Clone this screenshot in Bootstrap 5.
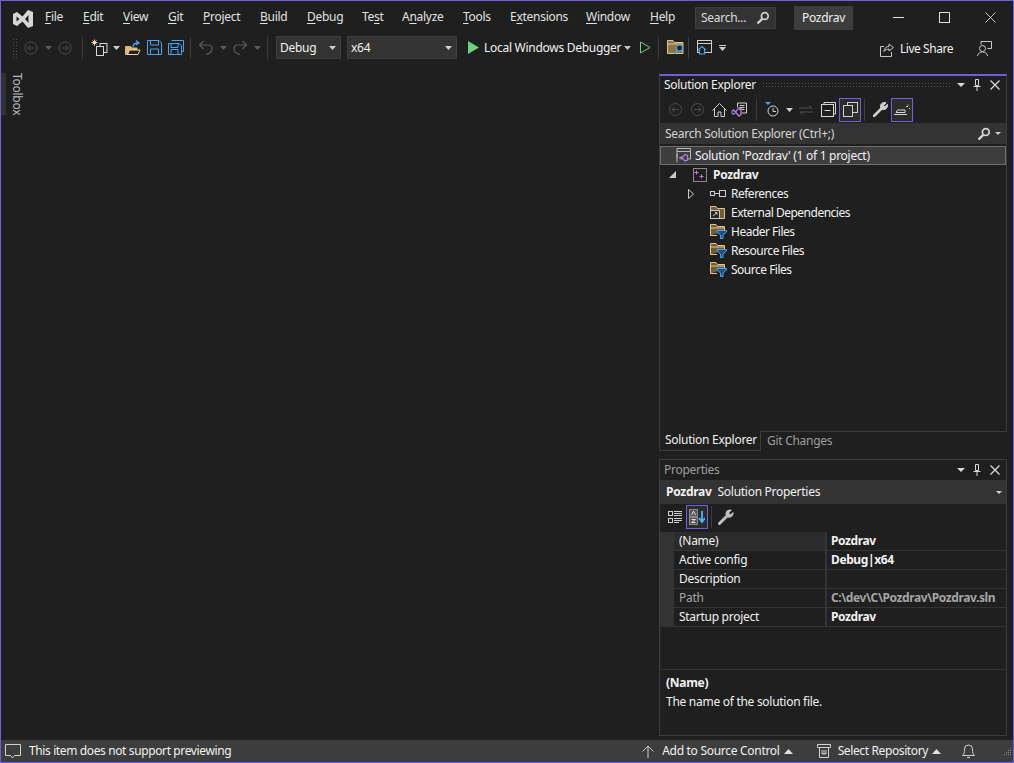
<!DOCTYPE html>
<html lang="en">
<head>
<meta charset="utf-8">
<title>Pozdrav - Visual Studio</title>
<link href="https://cdn.jsdelivr.net/npm/bootstrap@5.3.0/dist/css/bootstrap.min.css" rel="stylesheet">
<style>
html,body{height:100%;margin:0;overflow:hidden}
body{background:#1f1f1f;color:#f1f1f1;font-family:"Noto Sans","Liberation Sans",sans-serif;font-size:12px;line-height:16px;letter-spacing:-.28px}
svg{display:block;flex:none}
u{text-underline-offset:2px;text-decoration-thickness:1px}
.vs-frame{width:1014px;height:763px;border:1px solid #6f5fdc}
.vs-title{height:33px;flex:none}
.vs-logo{width:44px;padding-left:12px;padding-top:2px;flex:none}
.vs-menu{display:grid;grid-template-columns:38px 40px 45px 35px 57px 47px 55px 40px 61px 47px 76px 64px 45px;width:650px;color:#e2e2e2;padding-bottom:2px;flex:none}
.vs-search{width:81px;height:22px;background:#333;border:1px solid #3d3d3d;padding:0 5px;color:#dcdcdc;flex:none}
.vs-sol{width:59px;height:24px;background:#3d3d3d;margin-left:18px;color:#f1f1f1;justify-content:center;flex:none}
.vs-wins{margin-left:auto}
.vs-wbtn{width:46px;justify-content:center}
.vs-tool{height:28px;flex:none;padding-left:11px;padding-bottom:1px}
.tw{display:flex;align-items:center;justify-content:center;height:22px;flex:none}
.w3{width:3px;flex:none}.w4{width:4px;flex:none}.w5{width:5px;flex:none}.w6{width:6px;flex:none}.w7{width:7px;flex:none}.w8{width:8px;flex:none}.w10{width:10px}.w12{width:12px}.w14{width:14px}.w16{width:16px}.w17{width:17px;flex:none}.w18{width:18px}.w20{width:20px}.w22{width:22px}
.vs-sep{width:1px;height:22px;background:#3d3d3d;flex:none}
.vs-grip{width:6px;height:20px;flex:none;background-image:radial-gradient(#555 .6px,transparent .7px);background-size:3px 3px}
.vs-combo{height:23px;background:#333;border:1px solid #3d3d3d;padding:0 4px 0 3px;justify-content:space-between;color:#f1f1f1;flex:none}
.c-debug{width:65px}.c-x64{width:110px}
.vs-playgap{margin-left:10px}
.vs-lsh{margin-top:2px}
.vs-lstext{margin-left:6px;letter-spacing:-.45px}
.vs-fb{margin-left:24px;margin-right:21px}
.vs-main{flex:1 1 0;min-height:0}
.vs-left{flex:1 1 0}
.vs-toolbox{margin-top:11px;height:42px;width:22px}
.vs-strip{width:6px;background:#333;height:42px}
.vs-vtext{writing-mode:vertical-rl;margin-left:5px;color:#b9b9b9;line-height:12px}
.vs-right{width:348px;margin:12px 6px 4px 0;flex:none}
.vs-se{height:357px;border:1px solid #3d3d3d;border-width:2px 1px 0;border-top-color:#6f5fdc;flex:none}
.vs-phead{height:20px;padding:0 4px;flex:none}
.vs-phead-se{padding-bottom:2px}
.vs-dots{flex:1 1 0;height:7px;margin:0 6px;background-image:radial-gradient(#555 .6px,transparent .7px);background-size:3px 3px}
.vs-ptool{height:27px;padding-left:4px;flex:none}
.vs-on{width:22px;height:24px;border:1px solid #6f5fdc;background:#2c2c2c;display:flex;align-items:center;justify-content:center;flex:none}
.vs-find{height:21px;background:#333;padding:0 5px;color:#d5d5d5;flex:none;justify-content:space-between}
.vs-selrow{height:19px;margin:2px 0 0;background:#3d3d3d;border:1px solid #707070;padding-left:15px;flex:none}
.vs-row{height:19px;flex:none;letter-spacing:-.5px}
.r-proj{padding-left:9px}.r-ref{padding-left:28px}.r-item{padding-left:50px}
.vs-ptxt{margin-left:5px;letter-spacing:-.3px}
.vs-t4{margin-left:4px}.vs-t5{margin-left:5px}.vs-t6{margin-left:6px}
.vs-tabs{height:20px;flex:none;padding-bottom:0}
.vs-tab1{width:102px;border:1px solid #3d3d3d;border-top:0;padding:0 0 2px 5px;display:flex;align-items:center}
.vs-tabrest{flex:1 1 0;border-top:1px solid #3d3d3d;padding:0 0 2px 6px;color:#9d9d9d;display:flex;align-items:center}
.vs-props{height:277px;margin-top:8px;border:1px solid #3d3d3d;flex:none}
.vs-ptitle{color:#9d9d9d}
.vs-pcombo{height:24px;background:#333;padding:0 4px 0 6px;flex:none}
.vs-ptb{height:28px;padding:0 0 2px 4px;flex:none}
.vs-gridbox{background:#333;padding-left:14px;flex:none}
.vs-gr{height:19px;border-bottom:1px solid #333;background:#1f1f1f;display:flex;align-items:center}
.vs-gn{width:153px;padding-left:5px;border-right:2px solid #333;height:18px;flex:none;display:flex;align-items:center}
.vs-gv{padding-left:4px;font-weight:700;white-space:nowrap;letter-spacing:-.4px}
.vs-hd{background:#2b2b2b}
.vs-dim{color:#a5a5a5}
.vs-gap{height:43px;border-bottom:1px solid #333;flex:none;border-left:1px solid #2a2a2a}
.vs-desc{padding:5px 5px 0 6px}
.vs-desc2{margin-top:3px}
.vs-status{height:22px;background:#3d3d3d;flex:none;color:#f1f1f1;letter-spacing:-.38px}
.vs-addtxt{letter-spacing:-.29px}
.vs-sa1{margin-right:24px}
.vs-seltxt{margin-left:7px}
.vs-sa2{margin-right:21px}
.vs-bell{margin-right:28px}
.vs-gripbr{margin-right:1px}
</style>
</head>
<body>
<div class="vs-frame d-flex flex-column">
  <!-- title bar -->
  <div class="vs-title d-flex align-items-center">
    <div class="vs-logo">
      <svg width="20" height="18" viewBox="0 0 20 18"><path fill="#d6d6d6" fill-rule="evenodd" d="M0 4 L4 2 L9.500 6.500 L15 0 L20 2 V16 L15 18 L9.500 11.500 L4 16 L0 14Z M3.500 6.500 V11.500 L6.500 9Z M15.500 5 L12 9 L15.500 13Z"/></svg>
    </div>
    <div class="vs-menu">
      <span><u>F</u>ile</span><span><u>E</u>dit</span><span><u>V</u>iew</span><span><u>G</u>it</span><span><u>P</u>roject</span><span><u>B</u>uild</span><span><u>D</u>ebug</span><span>Te<u>s</u>t</span><span>A<u>n</u>alyze</span><span><u>T</u>ools</span><span>E<u>x</u>tensions</span><span><u>W</u>indow</span><span><u>H</u>elp</span>
    </div>
    <div class="vs-search d-flex align-items-center justify-content-between">
      <span>Search...</span>
      <svg width="14" height="14" viewBox="0 0 14 14" fill="none" stroke="#d0d0d0"><circle cx="8.800" cy="5" r="3.400" stroke-width="1.700"/><path d="M6.200 7.800 L1.500 12.500" stroke-width="2.400"/></svg>
    </div>
    <div class="vs-sol d-flex align-items-center">Pozdrav</div>
    <div class="vs-wins d-flex align-items-center">
      <div class="vs-wbtn d-flex"><svg width="11" height="11" viewBox="0 0 11 11"><path d="M0 5.500H11" stroke="#e0e0e0"/></svg></div>
      <div class="vs-wbtn d-flex"><svg width="11" height="11" viewBox="0 0 11 11"><rect x=".5" y=".5" width="10" height="10" fill="none" stroke="#e0e0e0"/></svg></div>
      <div class="vs-wbtn d-flex"><svg width="11" height="11" viewBox="0 0 11 11"><path d="M.5 .5L10.500 10.500M10.500 .5L.5 10.500" stroke="#c8c8c8"/></svg></div>
    </div>
  </div>

  <!-- toolbar -->
  <div class="vs-tool d-flex align-items-center">
    <div class="vs-grip"></div>
    <div class="tw w18 ms-1"><svg width="14" height="14" viewBox="0 0 14 14" fill="none" stroke="#4d4d4d"><circle cx="7" cy="7" r="6"/><path d="M10.500 7H3.500M6.500 4L3.500 7L6.500 10"/></svg></div>
    <div class="tw w16"><svg width="7" height="4" viewBox="0 0 7 4"><path d="M0 0H7L3.500 4Z" fill="#5c5c5c"/></svg></div>
    <div class="tw w18"><svg width="14" height="14" viewBox="0 0 14 14" fill="none" stroke="#4d4d4d"><circle cx="7" cy="7" r="6"/><path d="M3.500 7H10.500M7.500 4L10.500 7L7.500 10"/></svg></div>
    <div class="w8"></div><div class="vs-sep"></div><div class="w8"></div>
    <div class="tw w18"><svg width="18" height="18" viewBox="0 0 18 18" fill="none"><rect x="9" y="4.500" width="7" height="9" stroke="#d8d8d8"/><rect x="5.500" y="7.500" width="7" height="9" fill="#1f1f1f" stroke="#d8d8d8"/><path d="M3.500 0.500V6.500M.5 3.500H6.500M1.500 1.500L5.500 5.500M5.500 1.500L1.500 5.500" stroke="#eed9a0"/></svg></div>
    <div class="tw w14"><svg width="7" height="4" viewBox="0 0 7 4"><path d="M0 0H7L3.500 4Z" fill="#d0d0d0"/></svg></div>
    <div class="tw w20"><svg width="16" height="16" viewBox="0 0 16 16" fill="none"><path d="M.5 14.500V6.500H5.500L7 8H12V14.500Z" fill="#dcb67a" stroke="#dcb67a"/><path d="M2.500 14.500L4.500 10H15L13 14.500Z" fill="#1f1f1f" stroke="#efd9a6"/><path d="M8 7C8 4 10 3 13 3M11 .5L14 3L11 5" stroke="#4da3f0" stroke-width="1.300"/></svg></div>
    <div class="tw w22"><svg width="15" height="15" viewBox="0 0 15 15" fill="none" stroke="#4da3f0"><path d="M.5 .5H12L14.500 3V14.500H.5Z"/><path d="M3.500 .5V5H11.500V.5M3.500 14.500V9H11.500V14.500"/></svg></div>
    <div class="tw w22"><svg width="16" height="15" viewBox="0 0 16 15" fill="none" stroke="#4da3f0"><path d="M3.500 .5H15.500V11.500H13.500"/><path d="M.5 3.500H11L13.500 5.500V14.500H.5Z"/><path d="M3 3.500V7.500H10V3.500M3 14.500V9.500H10V14.500"/></svg></div>
    <div class="w3"></div><div class="vs-sep"></div><div class="w8"></div>
    <div class="tw w14"><svg width="14" height="15" viewBox="0 0 14 15" fill="none" stroke="#5c5c5c" stroke-width="1.200"><path d="M.5 5H9C12 5 13 7 13 9S11 13.500 7 14.500M4.500 1L.5 5L4.500 9"/></svg></div>
    <div class="tw w20"><svg width="7" height="4" viewBox="0 0 7 4"><path d="M0 0H7L3.500 4Z" fill="#5c5c5c"/></svg></div>
    <div class="tw w14"><svg width="14" height="15" viewBox="0 0 14 15" fill="none" stroke="#5c5c5c" stroke-width="1.200"><path d="M13.500 5H5C2 5 1 7 1 9S3 13.500 7 14.500M9.500 1L13.500 5L9.500 9"/></svg></div>
    <div class="tw w20"><svg width="7" height="4" viewBox="0 0 7 4"><path d="M0 0H7L3.500 4Z" fill="#5c5c5c"/></svg></div>
    <div class="vs-sep"></div><div class="w8"></div>
    <div class="vs-combo c-debug d-flex align-items-center"><span>Debug</span><svg width="7" height="4" viewBox="0 0 7 4"><path d="M0 0H7L3.500 4Z" fill="#d0d0d0"/></svg></div>
    <div class="w6"></div>
    <div class="vs-combo c-x64 d-flex align-items-center"><span>x64</span><svg width="7" height="4" viewBox="0 0 7 4"><path d="M0 0H7L3.500 4Z" fill="#d0d0d0"/></svg></div>
    <div class="tw vs-playgap w12"><svg width="11" height="13" viewBox="0 0 11 13"><path d="M0 0L11 6.500L0 13Z" fill="#6fcf7c"/></svg></div>
    <div class="w5"></div>
    <span class="text-nowrap">Local Windows Debugger</span>
    <div class="tw w12"><svg width="7" height="4" viewBox="0 0 7 4"><path d="M0 0H7L3.500 4Z" fill="#c8c8c8"/></svg></div>
    <div class="w4"></div>
    <div class="tw w16"><svg width="11" height="13" viewBox="0 0 11 13" fill="none"><path d="M.5 1L10 6.500L.5 12Z" stroke="#6fcf7c"/></svg></div>
    <div class="w5"></div><div class="vs-sep"></div><div class="w8"></div>
    <div class="tw w18"><svg width="18" height="15" viewBox="0 0 18 15" fill="none"><path d="M.5 13.500V.5H6L7.500 2.500H16V13.500Z" fill="#8a7449" stroke="#e3c58c"/><path d="M1 4H15.500" stroke="#e3c58c"/><circle cx="12.500" cy="8" r="3" fill="#1f1f1f" stroke="#4da3f0" stroke-width="1.200"/><path d="M10.300 10.300L7.500 14" stroke="#4da3f0" stroke-width="1.700"/></svg></div>
    <div class="w3"></div><div class="vs-sep"></div><div class="w7"></div>
    <div class="tw w16"><svg width="15" height="15" viewBox="0 0 15 15" fill="none"><rect x=".5" y=".5" width="14" height="12" stroke="#cfcfcf"/><path d="M.5 3.500H14.500" stroke="#cfcfcf"/><path d="M1 10L5 6.500L9 10M2.500 9.500V14H7.500V9.500" fill="#1f1f1f" stroke="#4da3f0" stroke-width="1.100"/></svg></div>
    <div class="tw w12 ms-1"><svg width="7" height="7" viewBox="0 0 7 7"><path d="M0 1H7V2H0ZM0 3H7L3.500 7Z" fill="#d0d0d0"/></svg></div>
    <div class="ms-auto d-flex align-items-center vs-lsh">
      <svg width="14" height="16" viewBox="0 0 14 16" fill="none" stroke="#c8c8c8"><path d="M4 5.500H.5V15.500H11.500V11"/><path d="M4 10.500C4 7 6.500 5.500 9 5.500V3L13.500 6.500L9 10V8C7 8 5 9 4 10.500Z"/></svg>
      <span class="text-nowrap vs-lstext">Live Share</span>
      <div class="tw vs-fb"><svg width="15" height="16" viewBox="0 0 15 16" fill="none" stroke="#c8c8c8"><circle cx="5.500" cy="7.500" r="3"/><path d="M.5 15C1 12 3 11 5.500 11S10 12 10.500 15M4 3.500V.5H14.500V7.500H10.500"/></svg></div>
    </div>
  </div>

  <!-- main -->
  <div class="vs-main d-flex">
    <div class="vs-left">
      <div class="vs-toolbox d-flex">
        <div class="vs-strip"></div>
        <div class="vs-vtext">Toolbox</div>
      </div>
    </div>
    <div class="vs-right d-flex flex-column">
      <div class="vs-se d-flex flex-column">
        <div class="vs-phead vs-phead-se d-flex align-items-center">
          <span class="text-nowrap">Solution Explorer</span>
          <div class="vs-dots"></div>
          <div class="d-flex align-items-center gap-1">
            <div class="tw w10"><svg width="8" height="4" viewBox="0 0 8 4"><path d="M0 0H8L4 4Z" fill="#d8d8d8"/></svg></div>
            <div class="tw w14"><svg width="8" height="12" viewBox="0 0 8 12" fill="none" stroke="#d8d8d8"><path d="M2.500 .5H5.500V6.500H2.500ZM.5 7.500H7.500M4 7.500V12"/></svg></div>
            <div class="tw w14"><svg width="10" height="10" viewBox="0 0 10 10"><path d="M.5 .5L9.500 9.500M9.500 .5L.5 9.500" stroke="#d8d8d8" stroke-width="1.300"/></svg></div>
          </div>
        </div>
        <div class="vs-ptool d-flex align-items-center">
          <div class="tw w22"><svg width="13" height="13" viewBox="0 0 13 13" fill="none" stroke="#4d4d4d"><circle cx="6.500" cy="6.500" r="6"/><path d="M10 6.500H3M6 3.500L3 6.500L6 9.500"/></svg></div>
          <div class="tw w22"><svg width="13" height="13" viewBox="0 0 13 13" fill="none" stroke="#4d4d4d"><circle cx="6.500" cy="6.500" r="6"/><path d="M3 6.500H10M7 3.500L10 6.500L7 9.500"/></svg></div>
          <div class="tw w22"><svg width="15" height="14" viewBox="0 0 15 14" fill="none" stroke="#d0d0d0"><path d="M.5 7.500L7.500 .5L14.500 7.500M2.500 6V13.500H6V9H9V13.500H12.500V6"/></svg></div>
          <div class="tw w18"><svg width="16" height="16" viewBox="0 0 16 16" fill="none"><path d="M6.500 5.500V1H15.500V11H11" stroke="#d0d0d0"/><path d="M8.500 3.500H13.500M8.500 5.500H13.500M8.500 7.500H13.500" stroke="#d0d0d0"/><path d="M.5 9.500L2.500 8L8 14L10 12.500V7L8 6L2.500 12L.5 10.500" stroke="#a97fe0" stroke-width="1.400"/></svg></div>
          <div class="w8"></div><div class="vs-sep"></div><div class="w7"></div>
          <div class="tw w16"><svg width="15" height="15" viewBox="0 0 15 15" fill="none"><path d="M0 0H6L3 3Z" fill="#4da3f0"/><circle cx="8" cy="9" r="5" stroke="#d0d0d0"/><path d="M8 6V9.500H11" stroke="#d0d0d0"/></svg></div>
          <div class="tw w18"><svg width="7" height="4" viewBox="0 0 7 4"><path d="M0 0H7L3.500 4Z" fill="#d0d0d0"/></svg></div>
          <div class="tw w16"><svg width="14" height="10" viewBox="0 0 14 10" fill="none" stroke="#505050"><path d="M0 3H13L10 .5M14 7H1L4 9.500"/></svg></div>
          <div class="w6"></div>
          <div class="tw w16"><svg width="15" height="15" viewBox="0 0 15 15" fill="none" stroke="#d8d8d8"><path d="M3 2.500V.5H14.500V12H12.500"/><rect x=".5" y="2.500" width="12" height="12"/><path d="M3.500 8.500H9.500"/></svg></div>
          <div class="w3"></div>
          <div class="vs-on"><svg width="15" height="15" viewBox="0 0 15 15" fill="none" stroke="#d0d0d0"><rect x="4.500" y=".5" width="10" height="10"/><rect x=".5" y="3.500" width="9" height="11" fill="#2c2c2c"/></svg></div>
          <div class="w3"></div><div class="vs-sep"></div><div class="w8"></div>
          <div class="tw w14"><svg width="15" height="15" viewBox="0 0 15 15" fill="none" stroke="#d0d0d0"><path d="M1 14L9 6" stroke-width="2.600" stroke-linecap="round"/><path d="M7.500 5.500A4 4 0 0 1 13 .8L10.500 3.500L11.800 4.800L14.300 2.300A4 4 0 0 1 9.500 7.500" fill="#d0d0d0" stroke-width="1"/></svg></div>
          <div class="w4"></div>
          <div class="vs-on"><svg width="16" height="12" viewBox="0 0 16 12" fill="none"><path d="M0 10.500H13M2 8.500L3.500 6H11V8.500Z" stroke="#d8d8d8"/><path d="M12 2.500H14M14 .5V1.500M15 4.500H16" stroke="#eed9a0"/></svg></div>
        </div>
        <div class="vs-find d-flex align-items-center">
          <span class="text-nowrap">Search Solution Explorer (Ctrl+;)</span>
          <div class="d-flex align-items-center gap-1">
            <svg width="14" height="14" viewBox="0 0 14 14" fill="none" stroke="#d8d8d8"><circle cx="8.800" cy="5" r="3.400" stroke-width="1.700"/><path d="M6.200 7.800L1.500 12.500" stroke-width="2.400"/></svg>
            <svg width="6" height="3" viewBox="0 0 6 3"><path d="M0 0H6L3 3Z" fill="#d0d0d0"/></svg>
          </div>
        </div>
        <div class="vs-selrow d-flex align-items-center">
          <svg width="15" height="15" viewBox="0 0 15 15" fill="none"><path d="M1 10V.5H14.500V11H12M.5 3.500H14.500" stroke="#b8b8b8"/><path d="M1 14.500V6" stroke="#b8b8b8"/><path d="M3.500 10L5 9L9 13L11.500 12V7.500L9 6.500L5 11L3.500 10" stroke="#a97fe0" stroke-width="1.300"/></svg>
          <span class="ms-1 text-nowrap">Solution 'Pozdrav' (1 of 1 project)</span>
        </div>
        <div class="vs-row r-proj d-flex align-items-center">
          <svg width="7" height="7" viewBox="0 0 7 7"><path d="M7 0V7H0Z" fill="#c8c8c8"/></svg>
          <div class="w17"></div>
          <svg width="15" height="14" viewBox="0 0 15 14" fill="none"><rect x=".5" y=".5" width="13" height="13" stroke="#8a8a8a"/><path d="M3.500 2.500V6.500M1.500 4.500H5.500M8.500 6.500V10.500M6.500 8.500H10.500" stroke="#c57fd8"/></svg>
          <span class="fw-bold vs-ptxt">Pozdrav</span>
        </div>
        <div class="vs-row r-ref d-flex align-items-center">
          <svg width="6" height="10" viewBox="0 0 6 10" fill="none"><path d="M.5 .5L5.500 5L.5 9.500Z" stroke="#c8c8c8"/></svg>
          <div class="w16"></div>
          <svg width="16" height="8" viewBox="0 0 16 8" fill="none" stroke="#d0d0d0"><rect x=".5" y="1.500" width="4" height="4"/><path d="M5 3.500H9"/><rect x="9.500" y=".5" width="6" height="6"/></svg>
          <span class="text-nowrap vs-t5">References</span>
        </div>
        <div class="vs-row r-item d-flex align-items-center">
          <svg width="15" height="13" viewBox="0 0 15 13" fill="none"><path d="M.5 12.500V.5H6L7.500 2.500H14.500V12.500Z" fill="#6e5c3a" stroke="#e3c58c"/><rect x=".5" y="4.500" width="9" height="8" fill="#2a2a2a" stroke="#c8c8c8"/><path d="M3 10L7 6.500M5 6.500H7V8.500" stroke="#c8c8c8"/></svg>
          <span class="text-nowrap vs-t6">External Dependencies</span>
        </div>
        <div class="vs-row r-item d-flex align-items-center">
          <svg width="17" height="15" viewBox="0 0 17 15" fill="none"><path d="M.5 11.500V.5H6L7.500 2.500H14.500V7" fill="#6e5c3a" stroke="#e3c58c"/><path d="M.5 11.500H7M1 4H14" stroke="#e3c58c"/><path d="M7 6.500H16.500V8L13 11V14.500H10.500V11L7 8Z" fill="#1f4f7a" stroke="#4da3f0"/></svg>
          <span class="text-nowrap vs-t4">Header Files</span>
        </div>
        <div class="vs-row r-item d-flex align-items-center">
          <svg width="17" height="15" viewBox="0 0 17 15" fill="none"><path d="M.5 11.500V.5H6L7.500 2.500H14.500V7" fill="#6e5c3a" stroke="#e3c58c"/><path d="M.5 11.500H7M1 4H14" stroke="#e3c58c"/><path d="M7 6.500H16.500V8L13 11V14.500H10.500V11L7 8Z" fill="#1f4f7a" stroke="#4da3f0"/></svg>
          <span class="text-nowrap vs-t4">Resource Files</span>
        </div>
        <div class="vs-row r-item d-flex align-items-center">
          <svg width="17" height="15" viewBox="0 0 17 15" fill="none"><path d="M.5 11.500V.5H6L7.500 2.500H14.500V7" fill="#6e5c3a" stroke="#e3c58c"/><path d="M.5 11.500H7M1 4H14" stroke="#e3c58c"/><path d="M7 6.500H16.500V8L13 11V14.500H10.500V11L7 8Z" fill="#1f4f7a" stroke="#4da3f0"/></svg>
          <span class="text-nowrap vs-t4">Source Files</span>
        </div>
      </div>
      <div class="vs-tabs d-flex">
        <div class="vs-tab1 text-nowrap">Solution Explorer</div>
        <div class="vs-tabrest text-nowrap">Git Changes</div>
      </div>
      <div class="vs-props d-flex flex-column">
        <div class="vs-phead d-flex align-items-center justify-content-between">
          <span class="vs-ptitle">Properties</span>
          <div class="d-flex align-items-center gap-1">
            <div class="tw w10"><svg width="8" height="4" viewBox="0 0 8 4"><path d="M0 0H8L4 4Z" fill="#d8d8d8"/></svg></div>
            <div class="tw w14"><svg width="8" height="12" viewBox="0 0 8 12" fill="none" stroke="#d8d8d8"><path d="M2.500 .5H5.500V6.500H2.500ZM.5 7.500H7.500M4 7.500V12"/></svg></div>
            <div class="tw w14"><svg width="10" height="10" viewBox="0 0 10 10"><path d="M.5 .5L9.500 9.500M9.500 .5L.5 9.500" stroke="#d8d8d8" stroke-width="1.300"/></svg></div>
          </div>
        </div>
        <div class="vs-pcombo d-flex align-items-center">
          <span class="fw-bold">Pozdrav</span><span class="vs-t6">Solution Properties</span>
          <svg class="ms-auto" width="6" height="3" viewBox="0 0 6 3"><path d="M0 0H6L3 3Z" fill="#d0d0d0"/></svg>
        </div>
        <div class="vs-ptb d-flex align-items-center">
          <div class="tw w22"><svg width="14" height="14" viewBox="0 0 14 14" fill="none" stroke="#d0d0d0"><rect x=".5" y="1.500" width="4" height="4"/><rect x=".5" y="8.500" width="4" height="4"/><path d="M6 1.500H14M6 3.500H14M6 5.500H14M6 8.500H14M6 10.500H14M6 12.500H11"/></svg></div>
          <div class="vs-on"><svg width="16" height="16" viewBox="0 0 16 16" fill="none"><rect x=".5" y=".5" width="8" height="7" fill="#555" stroke="#888"/><path d="M2.500 6L4.500 2L6.500 6" stroke="#e0e0e0"/><rect x=".5" y="8.500" width="8" height="7" fill="#555" stroke="#888"/><path d="M2.500 10.500H6.500L2.500 13.500H6.500" stroke="#e0e0e0"/><path d="M13 2V12M10 9L13 13L16 9" stroke="#4db4f0" stroke-width="1.800"/></svg></div>
          <div class="w3"></div><div class="vs-sep"></div><div class="w6"></div>
          <div class="tw w16"><svg width="16" height="16" viewBox="0 0 16 16" fill="none"><path d="M1.500 14.500L9 7" stroke="#c0c0c0" stroke-width="3" stroke-linecap="round"/><path d="M7.500 5.500A4.500 4.500 0 0 1 14 1L11 4L12.500 5.500L15.300 2.700A4.500 4.500 0 0 1 10 8.500Z" fill="#c0c0c0"/></svg></div>
        </div>
        <div class="vs-gridbox">
          <div class="vs-gr"><div class="vs-gn vs-hd">(Name)</div><div class="vs-gv">Pozdrav</div></div>
          <div class="vs-gr"><div class="vs-gn">Active config</div><div class="vs-gv">Debug|x64</div></div>
          <div class="vs-gr"><div class="vs-gn">Description</div><div class="vs-gv"></div></div>
          <div class="vs-gr"><div class="vs-gn vs-dim">Path</div><div class="vs-gv vs-dim">C:\dev\C\Pozdrav\Pozdrav.sln</div></div>
          <div class="vs-gr"><div class="vs-gn">Startup project</div><div class="vs-gv">Pozdrav</div></div>
        </div>
        <div class="vs-gap"></div>
        <div class="vs-desc">
          <div class="fw-bold">(Name)</div>
          <div class="vs-desc2">The name of the solution file.</div>
        </div>
      </div>
    </div>
  </div>

  <!-- status bar -->
  <div class="vs-status d-flex align-items-center">
    <svg class="ms-1" width="16" height="15" viewBox="0 0 16 15" fill="none" stroke="#d0d0d0"><path d="M.5 .5H15.500V11.500H9.500L7.500 14L5.500 11.500H.5Z"/></svg>
    <span class="ms-2 text-nowrap">This item does not support previewing</span>
    <div class="ms-auto d-flex align-items-center">
      <svg width="12" height="13" viewBox="0 0 12 13" fill="none" stroke="#d0d0d0"><path d="M6 13V1M.5 6.500L6 1L11.500 6.500"/></svg>
      <span class="ms-2 text-nowrap vs-addtxt">Add to Source Control</span>
      <svg class="ms-1 vs-sa1" width="9" height="5" viewBox="0 0 9 5"><path d="M0 5H9L4.500 0Z" fill="#e0e0e0"/></svg>
      <svg width="14" height="14" viewBox="0 0 14 14" fill="none" stroke="#d0d0d0"><path d="M.5 .5H13.500V3.500H.5ZM2.500 3.500V13.500H11.500V3.500M5 6V10H9V6M7 6V10"/></svg>
      <span class="text-nowrap vs-seltxt">Select Repository</span>
      <svg class="ms-1 vs-sa2" width="9" height="5" viewBox="0 0 9 5"><path d="M0 5H9L4.500 0Z" fill="#e0e0e0"/></svg>
      <svg class="vs-bell" width="13" height="14" viewBox="0 0 13 14" fill="none" stroke="#d0d0d0"><path d="M.5 11.500C2 10 2.500 9 2.500 5A4 4 0 0 1 10.500 5C10.500 9 11 10 12.500 11.500ZM5 13.500H8"/></svg>
      <svg class="vs-gripbr" width="9" height="9" viewBox="0 0 9 9"><path d="M7 1h1v1H7zM5 3h1v1H5zM7 3h1v1H7zM3 5h1v1H3zM5 5h1v1H5zM7 5h1v1H7zM1 7h1v1H1zM3 7h1v1H3zM5 7h1v1H5zM7 7h1v1H7z" fill="#8a8a8a"/></svg>
    </div>
  </div>
</div>
</body>
</html>
